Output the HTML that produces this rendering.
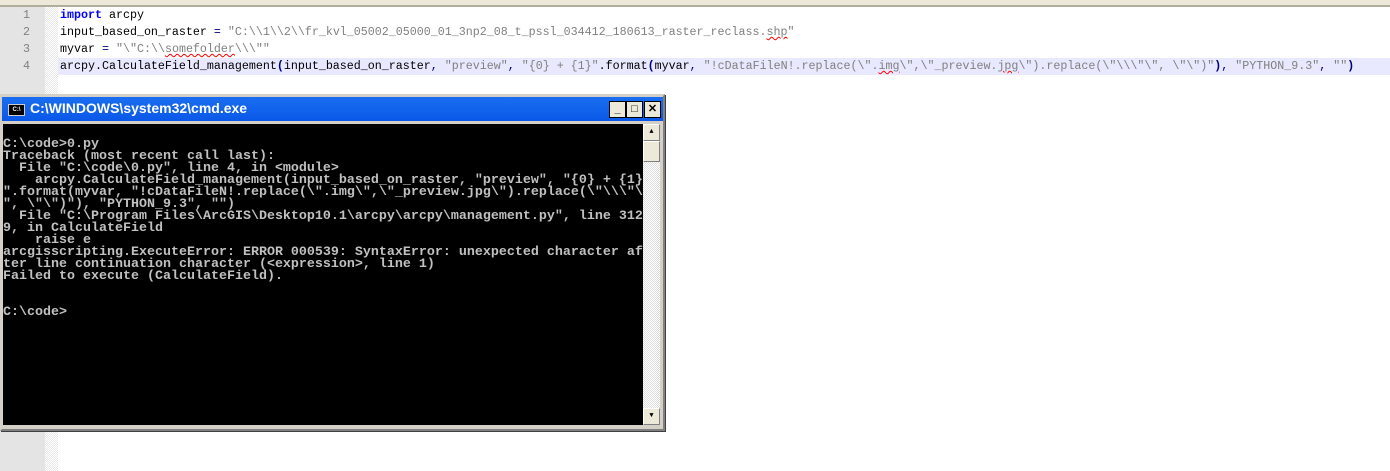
<!DOCTYPE html>
<html><head><meta charset="utf-8"><style>
body{margin:0;width:1390px;height:471px;background:#fff;position:relative;overflow:hidden;font-family:"Liberation Mono",monospace}
.tb{position:absolute;left:0;top:0;width:1390px;height:5px;background:#ece9d8;border-bottom:2px solid #b0ad9f}
.gut{position:absolute;left:0;top:7px;width:45px;height:464px;background:#e4e4e4}
.fold{position:absolute;left:45px;top:7px;width:13px;height:464px;background:repeating-conic-gradient(#e8e8e8 0 25%,#fff 0 50%) 0 0/2px 2px}
.hl{position:absolute;left:58px;top:58px;width:1332px;height:17px;background:#e8e8ff}
.ln{position:absolute;left:0;width:30px;text-align:right;color:#808080;font-size:11.67px;line-height:17px}
.code{position:absolute;left:60px;font-size:11.67px;line-height:17px;white-space:pre;color:#000}
.k{color:#0000ff;font-weight:bold}.s{color:#808080}.o{color:#000080}.p{color:#000080;font-weight:bold}
.sq{text-decoration:underline wavy red;text-decoration-thickness:1px}
.win{position:absolute;left:0;top:94px;width:661px;height:333px;background:#d4d0c8;border:2px solid #d4d0c8;border-right-color:#808080;border-bottom-color:#808080;box-shadow:1px 1px 0 #404040}
.title{position:absolute;left:0;top:1px;width:661px;height:24px;background:linear-gradient(#1a6ef0,#0a58e8);}
.title span{position:absolute;left:28px;top:3px;color:#fff;font:bold 14px "Liberation Sans",sans-serif}
.ic{position:absolute;left:6px;top:7px;width:15px;height:10px;background:#000;border:1px solid #ccc;color:#fff;font:bold 6px "Liberation Sans";line-height:10px;text-align:center}
.btn{position:absolute;top:4px;width:15px;height:15px;background:#ece9d8;border:1px solid #000;font:bold 11px "Liberation Sans";text-align:center;line-height:15px;color:#000}
.con{position:absolute;left:1px;top:28px;width:640px;height:301px;background:#000;color:#c0c0c0;font:bold 13.33px "Liberation Mono",monospace;line-height:12px;white-space:pre;overflow:hidden}
.con div{position:absolute;left:0;top:15px}
.sb{position:absolute;left:641px;top:28px;width:17px;height:301px;background:repeating-conic-gradient(#ddd 0 25%,#fff 0 50%) 0 0/2px 2px}
.ar{position:absolute;left:0;width:15px;height:15px;background:#ece9d8;border:1px solid #fff;border-right-color:#808080;border-bottom-color:#808080;font-size:7px;text-align:center;line-height:15px}
</style></head><body>
<div class="tb"></div>
<div class="gut"></div><div class="fold"></div><div class="hl"></div>
<div class="ln" style="top:7px">1</div><div class="ln" style="top:24px">2</div><div class="ln" style="top:41px">3</div><div class="ln" style="top:58px">4</div>
<div class="code" style="top:7px"><span class="k">import</span> arcpy</div>
<div class="code" style="top:24px">input_based_on_raster <span class="o">=</span> <span class="s">"C:\\1\\2\\fr_kvl_05002_05000_01_3np2_08_t_pssl_034412_180613_raster_reclass.<span class="sq">shp</span>"</span></div>
<div class="code" style="top:41px">myvar <span class="o">=</span> <span class="s">"\"C:\\<span class="sq">somefolder</span>\\\""</span></div>
<div class="code" style="top:58px">arcpy.CalculateField_management<span class="p">(</span>input_based_on_raster<span class="o">,</span> <span class="s">"preview"</span><span class="o">,</span> <span class="s">"{0} + {1}"</span>.format<span class="p">(</span>myvar<span class="o">,</span> <span class="s">"!cDataFileN!.replace(\".<span class="sq">img</span>\",\"_preview.<span class="sq">jpg</span>\").replace(\"\\\"\", \"\")"</span><span class="p">)</span><span class="o">,</span> <span class="s">"PYTHON_9.3"</span><span class="o">,</span> <span class="s">""</span><span class="p">)</span></div>
<div class="win">
<div class="title"><div class="ic">C:\</div><span>C:\WINDOWS\system32\cmd.exe</span>
<div class="btn" style="left:607px">_</div><div class="btn" style="left:624px">□</div><div class="btn" style="left:642px">✕</div></div>
<div class="con"><div>C:\code&gt;0.py
Traceback (most recent call last):
  File "C:\code\0.py", line 4, in &lt;module&gt;
    arcpy.CalculateField_management(input_based_on_raster, "preview", "{0} + {1}
".format(myvar, "!cDataFileN!.replace(\".img\",\"_preview.jpg\").replace(\"\\\"\
", \"\")"), "PYTHON_9.3", "")
  File "C:\Program Files\ArcGIS\Desktop10.1\arcpy\arcpy\management.py", line 312
9, in CalculateField
    raise e
arcgisscripting.ExecuteError: ERROR 000539: SyntaxError: unexpected character af
ter line continuation character (&lt;expression&gt;, line 1)
Failed to execute (CalculateField).


C:\code&gt;</div></div>
<div class="sb"><div class="ar" style="top:0">▲</div><div class="ar" style="top:17px;height:19px;line-height:19px"></div><div class="ar" style="top:284px">▼</div></div>
</div>
</body></html>
